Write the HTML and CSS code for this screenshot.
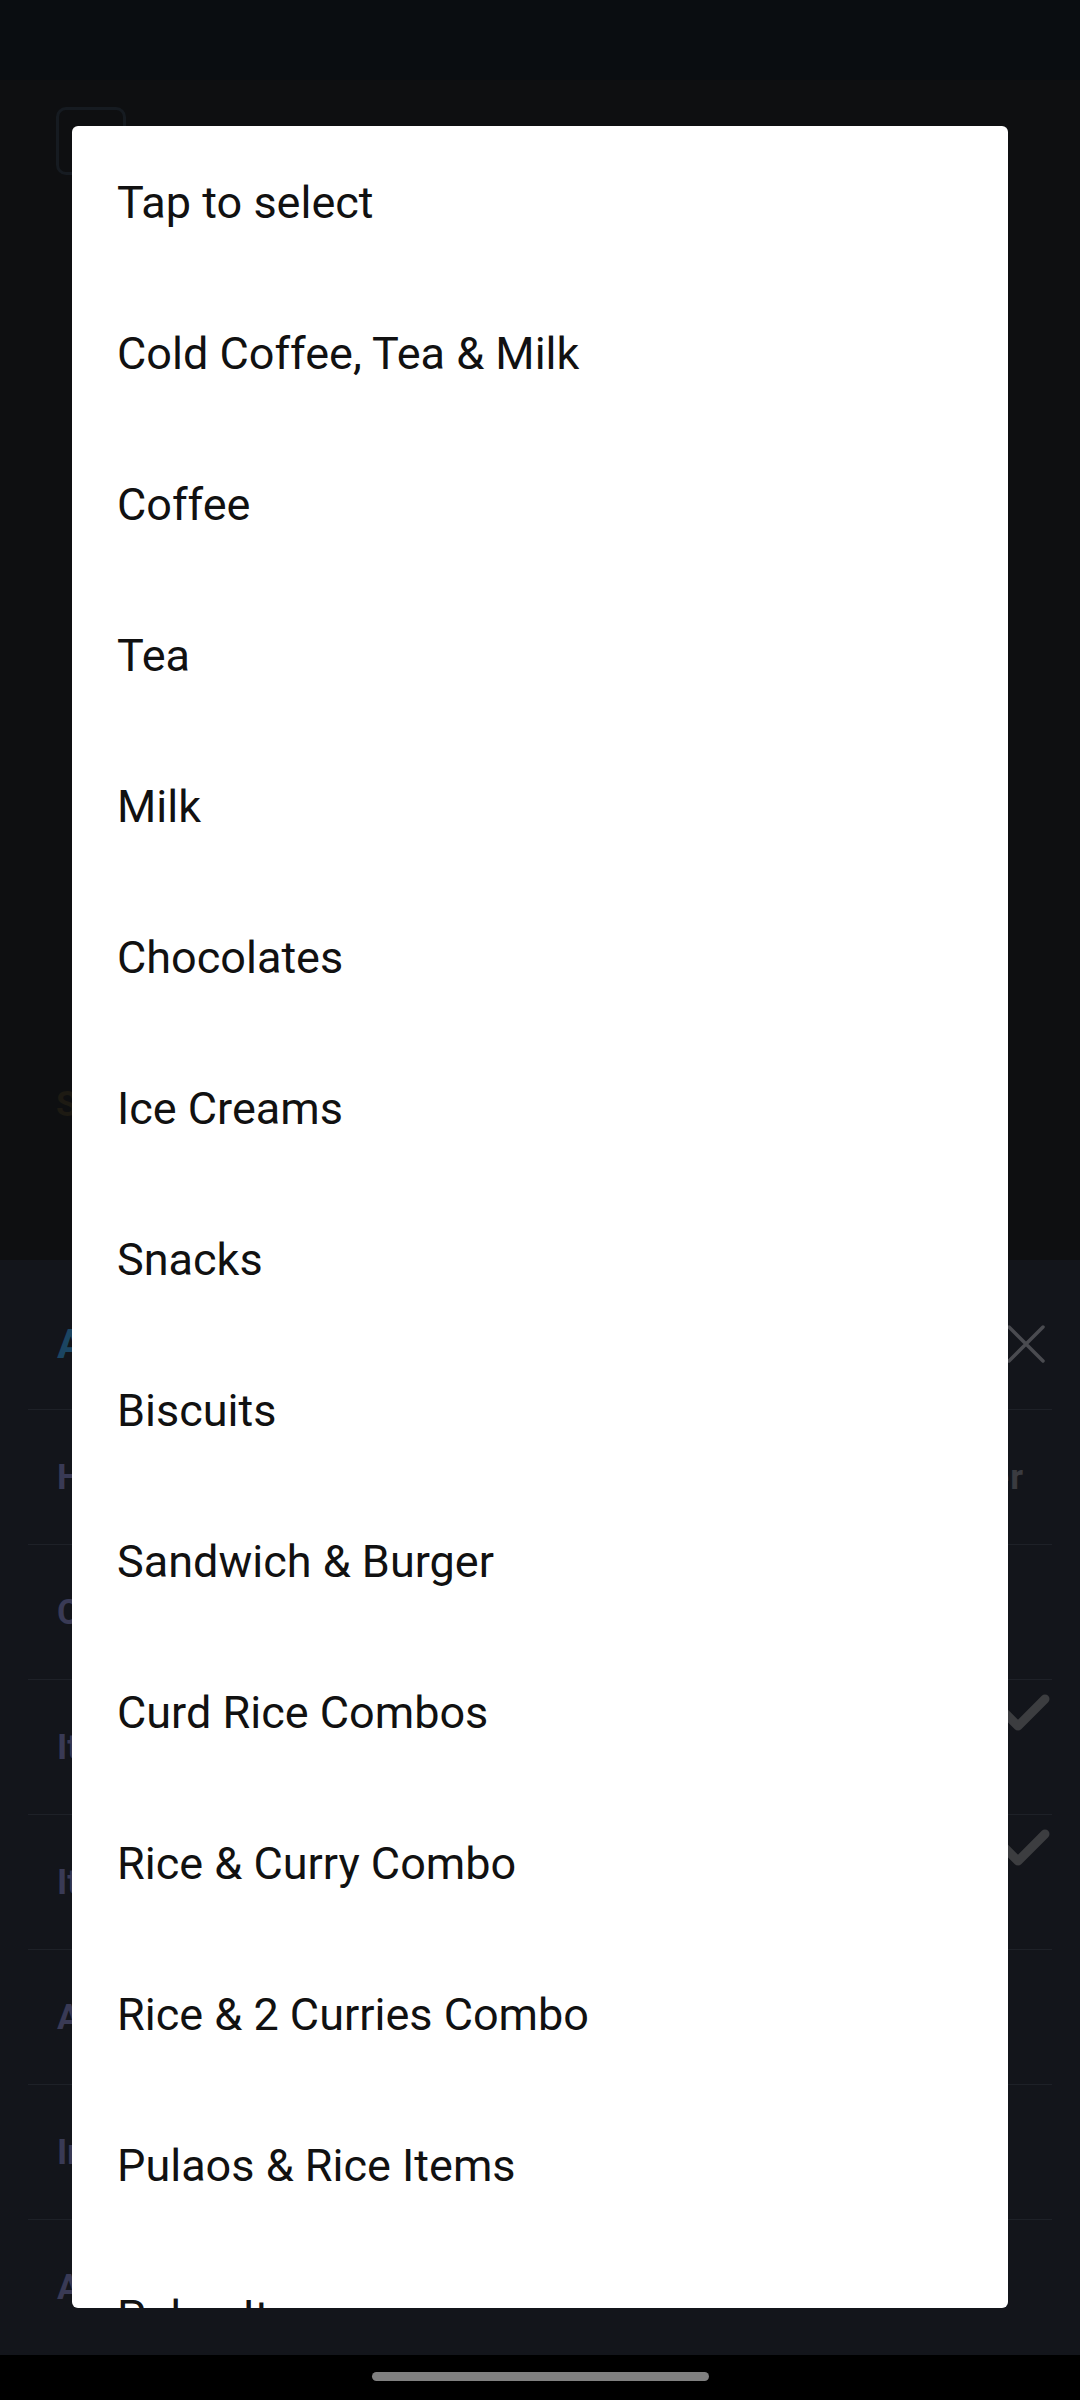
FILE: index.html
```html
<!DOCTYPE html>
<html>
<head>
<meta charset="utf-8">
<link rel="stylesheet" href="styles.css">
</head>
<body>
<div class="screen">
  <div class="status-bar"></div>
  <div class="main-area">
    <div class="back-btn"></div>
    <div class="spacer"></div>
    <div class="section-label">Snacks</div>
  </div>
  <div class="sheet">
    <div class="sheet-head">
      <div class="sheet-title">Add Item</div>
      <svg class="close-icon" width="38" height="38" viewBox="0 0 38 38"><path d="M2 2 L36 36 M36 2 L2 36" stroke="#4a4b50" stroke-width="3.5" stroke-linecap="round"/></svg>
    </div>
    <div class="sheet-row"><span class="row-label">Hotel</span><span class="row-value">Counter</span></div>
    <div class="sheet-row"><span class="row-label">Category</span></div>
    <div class="sheet-row"><span class="row-label">Item Name</span><svg class="check" width="60" height="46" viewBox="0 0 60 46"><path d="M6 16 L28 38 L55 11" fill="none" stroke="#3c3d40" stroke-width="9" stroke-linecap="round" stroke-linejoin="round"/></svg></div>
    <div class="sheet-row"><span class="row-label">Item Price</span><svg class="check" width="60" height="46" viewBox="0 0 60 46"><path d="M6 16 L28 38 L55 11" fill="none" stroke="#3c3d40" stroke-width="9" stroke-linecap="round" stroke-linejoin="round"/></svg></div>
    <div class="sheet-row"><span class="row-label">Available</span></div>
    <div class="sheet-row"><span class="row-label">In Stock</span></div>
    <div class="sheet-row last"><span class="row-label">Add-ons</span></div>
  </div>
  <div class="nav-bar"><div class="nav-handle"></div></div>

  <div class="dialog">
    <div class="dialog-list">
      <div class="dialog-item">Tap to select</div>
      <div class="dialog-item">Cold Coffee, Tea &amp; Milk</div>
      <div class="dialog-item">Coffee</div>
      <div class="dialog-item">Tea</div>
      <div class="dialog-item">Milk</div>
      <div class="dialog-item">Chocolates</div>
      <div class="dialog-item">Ice Creams</div>
      <div class="dialog-item">Snacks</div>
      <div class="dialog-item">Biscuits</div>
      <div class="dialog-item">Sandwich &amp; Burger</div>
      <div class="dialog-item">Curd Rice Combos</div>
      <div class="dialog-item">Rice &amp; Curry Combo</div>
      <div class="dialog-item">Rice &amp; 2 Curries Combo</div>
      <div class="dialog-item">Pulaos &amp; Rice Items</div>
      <div class="dialog-item">Pulao Items</div>
    </div>
  </div>
</div>
</body>
</html>
```
FILE: styles.css
```css
html, body {
  margin: 0;
  padding: 0;
  background: #000;
}
body {
  font-family: Roboto, "Noto Sans", "Liberation Sans", sans-serif;
}
.screen {
  position: relative;
  width: 1080px;
  height: 2400px;
  overflow: hidden;
  display: flex;
  flex-direction: column;
}
.status-bar {
  height: 80px;
  flex: none;
  background: #0a0d11;
}
.main-area {
  height: 1180px;
  flex: none;
  background: #0e0f11;
  padding: 27px 0 0 56px;
  box-sizing: border-box;
  display: flex;
  flex-direction: column;
}
.back-btn {
  width: 70px;
  height: 68px;
  box-sizing: border-box;
  border: 3px solid #161b21;
  border-radius: 10px;
}
.spacer {
  height: 910px;
}
.section-label {
  font-size: 35px;
  font-weight: 700;
  color: #1d1a13;
  line-height: 40px;
}
.sheet {
  height: 1095px;
  flex: none;
  background: #13151b;
  display: flex;
  flex-direction: column;
  padding: 0 28px;
  box-sizing: border-box;
}
.sheet-head {
  height: 149px;
  flex: none;
  display: flex;
  align-items: center;
  justify-content: space-between;
  padding: 18px 7px 0 29px;
  box-sizing: border-box;
}
.sheet-title {
  font-size: 41px;
  font-weight: 700;
  color: #1b4562;
}
.close-icon {
  display: block;
}
.sheet-row {
  height: 135px;
  flex: none;
  box-sizing: border-box;
  border-top: 1px solid #1e2128;
  display: flex;
  align-items: center;
  justify-content: space-between;
  padding: 0 28px 0 29px;
}
.sheet-row.last {
  height: 136px;
}
.row-label {
  font-size: 35px;
  font-weight: 700;
  color: #393a55;
}
.row-value {
  font-size: 35px;
  font-weight: 700;
  color: #3a3b40;
  letter-spacing: 1px;
}
.check {
  display: block;
  align-self: flex-start;
  margin-top: 8px;
  margin-right: -26px;
}
.nav-bar {
  height: 45px;
  flex: none;
  background: #000;
  display: flex;
  justify-content: center;
  padding-top: 17px;
  box-sizing: border-box;
}
.nav-handle {
  width: 337px;
  height: 9px;
  border-radius: 5px;
  background: #808080;
}
.dialog {
  position: absolute;
  left: 72px;
  top: 126px;
  width: 936px;
  height: 2182px;
  background: #ffffff;
  border-radius: 6px;
  overflow: hidden;
}
.dialog-list {
  padding-top: 1px;
  display: flex;
  flex-direction: column;
}
.dialog-item {
  height: 151px;
  flex: none;
  display: flex;
  align-items: center;
  padding-left: 45px;
  font-size: 45px;
  color: #111111;
  white-space: nowrap;
}
```
